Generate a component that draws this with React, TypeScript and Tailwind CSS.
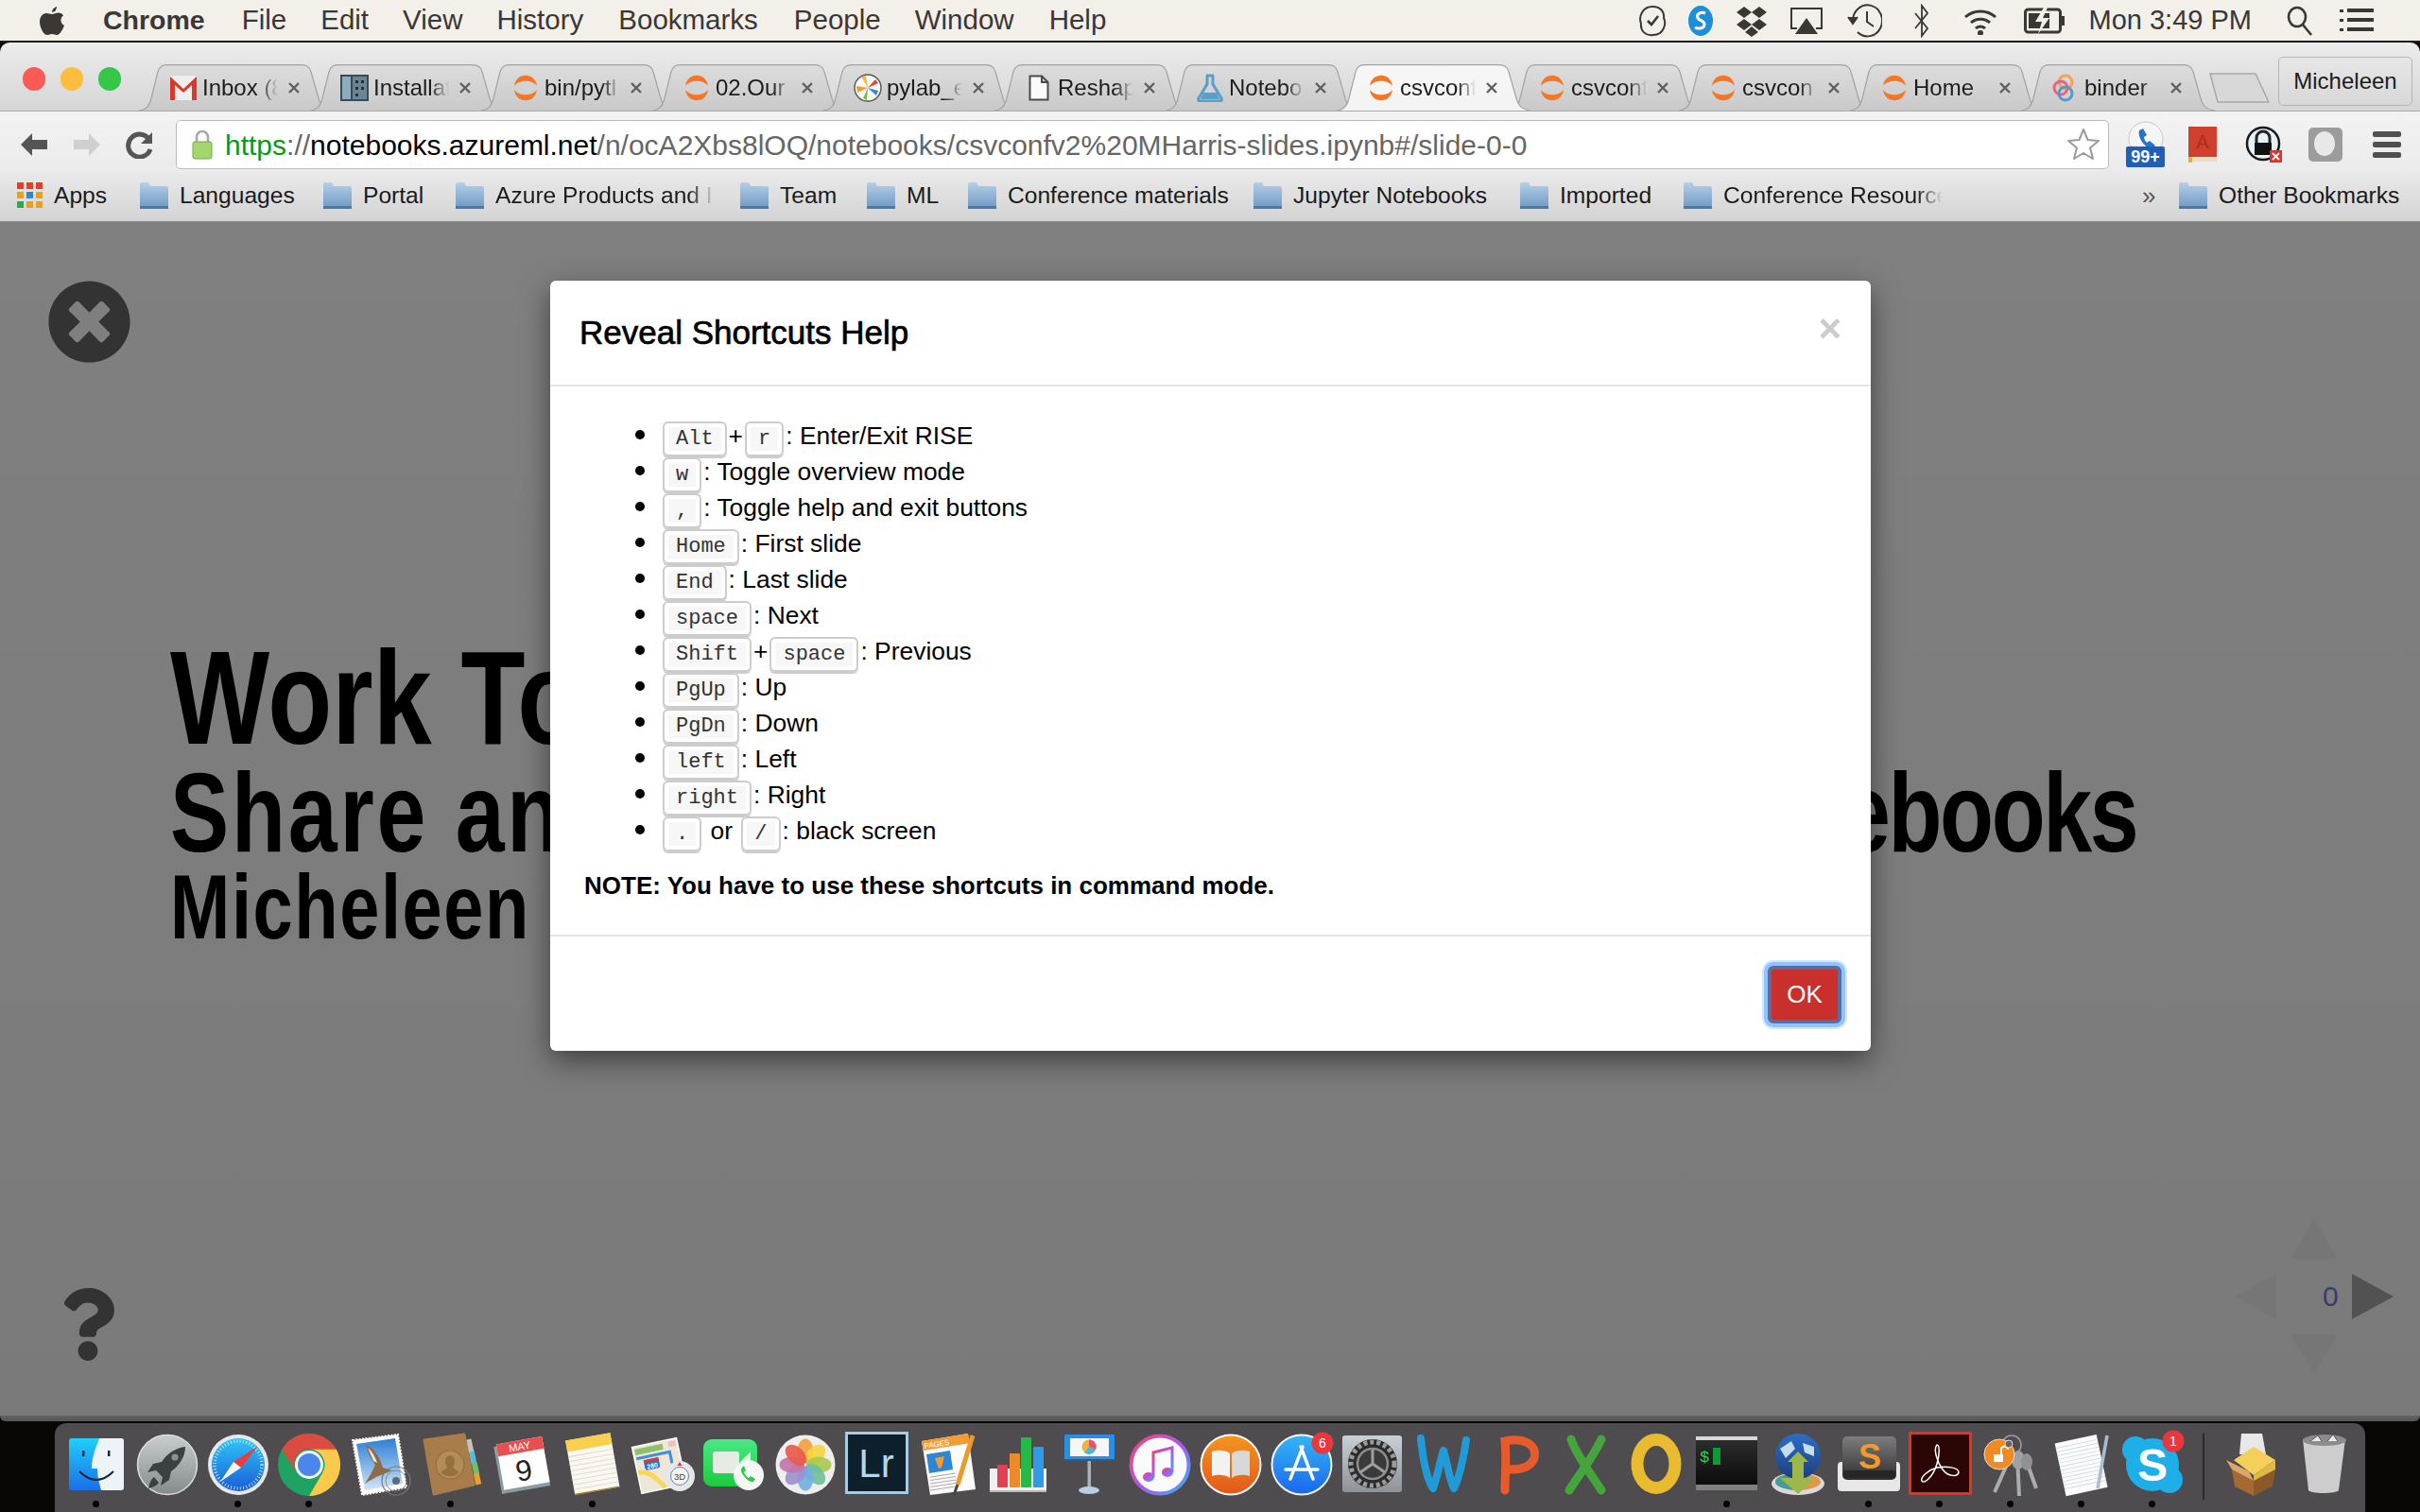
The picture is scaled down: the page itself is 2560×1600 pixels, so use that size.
import React from "react";
import { FaTimesCircle, FaQuestion } from "react-icons/fa";

const S = ({ children }: { children: React.ReactNode }) => (
  <svg viewBox="0 0 66 66" className="h-[66px] w-[66px] overflow-visible">{children}</svg>
);
const G = ({ id, a, b }: { id: string; a: string; b: string }) => (
  <defs>
    <linearGradient id={id} x1="0" y1="0" x2="0" y2="1">
      <stop offset="0" stopColor={a} />
      <stop offset="1" stopColor={b} />
    </linearGradient>
  </defs>
);
const sans = "Liberation Sans, sans-serif";

const Finder = () => (
  <S>
    <G id="fi" a="#1fd0fb" b="#1b6fe6" />
    <rect x="4" y="5" width="58" height="55" rx="3" fill="url(#fi)" />
    <path d="M36 5 C33 14 28 24 28 37 H34 C34 46 36 52 38 60 H59 a3 3 0 0 0 3 -3 V8 a3 3 0 0 0 -3 -3 Z" fill="#eef3f8" />
    <rect x="18" y="18" width="2.4" height="6" fill="#10233f" />
    <rect x="45" y="18" width="2.4" height="6" fill="#10233f" />
    <path d="M15 40 Q33 58 51 40" stroke="#10233f" strokeWidth="2" fill="none" />
  </S>
);
const Rocket = () => (
  <S>
    <G id="ro" a="#c9cdcd" b="#858a8a" />
    <circle cx="33" cy="33" r="31.5" fill="url(#ro)" stroke="#dcdede" strokeWidth="1.5" />
    <path d="M52 14 C42 15 33 21 27 30 L18 32 L12 41 L21 39 L28 46 L26 55 L35 49 L37 40 C46 34 52 24 52 14Z" fill="#3d4043" />
    <path d="M19 46 C15 49 14 54 13 58 C18 57 22 55 24 52 Z" fill="#3d4043" />
    <circle cx="41" cy="25" r="3.5" fill="#8a8f8f" />
  </S>
);
const Safari = () => (
  <S>
    <G id="sa" a="#2fc6f6" b="#1a5cd8" />
    <circle cx="33" cy="33" r="32" fill="#e6e9ec" />
    <circle cx="33" cy="33" r="28" fill="url(#sa)" />
    <circle cx="33" cy="33" r="25" fill="none" stroke="#dff1ff" strokeWidth="3.5" strokeDasharray="0.8 2.5" />
    <path d="M53 14 L28 30 L36 36Z" fill="#ee3a3a" />
    <path d="M14 51 L28 30 L36 36Z" fill="#f2f2f2" />
  </S>
);
const Chrome = () => (
  <S>
    <circle cx="33" cy="33" r="33" fill="#1ea362" />
    <path d="M61.6 16.5 A33 33 0 0 1 33 66 L47.3 41.2 A16.5 16.5 0 0 0 33 16.5 Z" fill="#fdc94a" />
    <path d="M4.4 16.5 A33 33 0 0 1 61.6 16.5 H33 A16.5 16.5 0 0 0 18.7 41.2 Z" fill="#db4b3f" />
    <circle cx="33" cy="33" r="15" fill="#f3f6fb" />
    <circle cx="33" cy="33" r="12" fill="#4a86ec" />
  </S>
);
const Mail = () => (
  <S>
    <G id="ma" a="#2e7fd6" b="#cfe6f7" />
    <polygon points="4,7 52,1 61,57 14,65" fill="#fff" stroke="#fff" strokeWidth="2" strokeDasharray="2 1.4" />
    <polygon points="8,11 49,5 57,53 17,60" fill="url(#ma)" />
    <path d="M18 12 C27 15 33 26 36 36 L46 39 L34 44 C28 46 22 50 17 53 C22 45 26 38 28 33 C23 27 20 20 18 12Z" fill="#8d6c49" />
    <path d="M20 15 C25 19 28 25 30 31 L26 29Z" fill="#e9e5de" />
    <circle cx="50" cy="50" r="15" fill="none" stroke="#77777a" strokeWidth="1.2" />
    <circle cx="50" cy="50" r="11" fill="none" stroke="#77777a" strokeWidth="0.8" />
    <circle cx="50" cy="50" r="4" fill="#5d6a7c" />
  </S>
);
const Contacts = () => (
  <S>
    <rect x="50" y="6" width="6" height="14" fill="#bfc3c2" transform="rotate(-12 53 13)" />
    <rect x="53" y="19" width="6" height="13" fill="#58bcd6" transform="rotate(-12 56 25)" />
    <rect x="56" y="31" width="6" height="12" fill="#6cc069" transform="rotate(-12 59 37)" />
    <rect x="58" y="42" width="6" height="12" fill="#e8a230" transform="rotate(-12 61 48)" />
    <polygon points="5,7 47,1 57,54 15,64" fill="#a87d49" stroke="#a87d49" strokeWidth="3" strokeLinejoin="round" />
    <circle cx="32" cy="33" r="15" fill="#b48c59" stroke="#96703f" strokeWidth="1.2" />
    <path d="M32 23 a5 6 0 0 1 5 6 c0 4 -2 6 -2 7 l7 5 a14 14 0 0 1 -20 0 l7 -5 c0 -1 -2 -3 -2 -7 a5 6 0 0 1 5 -6z" fill="#96703f" />
  </S>
);
const Calendar = () => (
  <S>
    <g transform="rotate(-10 33 33)">
      <rect x="7" y="9" width="52" height="51" fill="#8c9aa4" />
      <rect x="10" y="7" width="49" height="49" fill="#fff" />
      <rect x="10" y="7" width="49" height="13" fill="#e94f51" />
      <text x="34" y="17.5" fontSize="11" fill="#fff" textAnchor="middle" fontFamily={sans}>MAY</text>
      <text x="34" y="50" fontSize="31" fill="#222" textAnchor="middle" fontFamily={sans}>9</text>
    </g>
  </S>
);
const Notes = () => (
  <S>
    <g transform="rotate(-10 33 33)">
      <rect x="9" y="3" width="48" height="58" fill="#faf8f0" />
      <rect x="9" y="3" width="48" height="12" fill="#f8d04c" />
      {[20, 25, 30, 35, 40, 45, 50, 55].map((y) => (
        <rect key={y} x="9" y={y} width="48" height="0.8" fill="#d9d4c6" />
      ))}
      <rect x="9" y="60" width="48" height="1.4" fill="#a5812e" />
    </g>
  </S>
);
const Maps = () => (
  <S>
    <g transform="rotate(-12 28 33)">
      <rect x="4" y="9" width="48" height="50" fill="#eee7d7" stroke="#fff" strokeWidth="1.5" />
      <rect x="6" y="12" width="30" height="6" fill="#8fc168" />
      <rect x="42" y="11" width="8" height="6" fill="#f0c0c8" />
      <path d="M6 22 H42 V40" fill="none" stroke="#3f8fe8" strokeWidth="3" />
      <path d="M5 37 C16 36 22 46 30 58" fill="none" stroke="#f6d85a" strokeWidth="5" />
      <rect x="13" y="25" width="16" height="11" rx="2" fill="#2b6fd0" />
      <rect x="13" y="25" width="16" height="3" fill="#d83a3a" />
      <text x="21" y="35" fontSize="7" fill="#fff" fontWeight="700" textAnchor="middle" fontFamily={sans}>280</text>
    </g>
    <circle cx="50" cy="45" r="16" fill="#e4e8ea" />
    <circle cx="50" cy="45" r="9.5" fill="#f3f3f3" stroke="#7d8184" strokeWidth="1" />
    <text x="50" y="48.5" fontSize="9.5" fill="#444" textAnchor="middle" fontFamily={sans}>3D</text>
    <polygon points="50,30 47.5,34 52.5,34" fill="#d83a3a" />
  </S>
);
const FaceTime = () => (
  <S>
    <G id="ft" a="#4ae887" b="#1ccb3c" />
    <rect x="0" y="6" width="57" height="50" rx="9" fill="url(#ft)" />
    <rect x="10" y="19" width="28" height="23" rx="3" fill="#e6ebe4" />
    <polygon points="39,30 50,19 50,42" fill="#e6ebe4" />
    <circle cx="48" cy="44" r="16" fill="#f4f6f3" />
    <path d="M41 36 c-2 2 -1 5 2 9 c3 4 7 7 10 6 l2 -3 l-5 -3 l-2 2 c-2 -1 -4 -4 -5 -6 l2 -2 l-2 -5z" fill="#2dc94a" />
  </S>
);
const Photos = () => {
  const c = ["#f4a23e", "#f5d63f", "#a8ca4e", "#72bf9c", "#70b0e2", "#9c92cc", "#c674ab", "#ea5b4e"];
  return (
    <S>
      <circle cx="33" cy="33" r="31.5" fill="#eeeeee" />
      {c.map((f, i) => (
        <ellipse key={f} cx="33" cy="19" rx="8.6" ry="13.5" fill={f} opacity="0.92" transform={`rotate(${i * 45} 33 33)`} />
      ))}
      <circle cx="33" cy="33" r="1.4" fill="#fff" />
    </S>
  );
};
const Lr = () => (
  <S>
    <rect x="1.5" y="-0.5" width="64" height="63" fill="#0e1f2c" stroke="#a9cbe2" strokeWidth="3" />
    <text x="33" y="46" fontSize="42" fill="#b7d6ea" textAnchor="middle" fontFamily={sans}>Lr</text>
  </S>
);
const Pages = () => (
  <S>
    <polygon points="6,8 55,0 63,59 15,65" fill="#fbfbfa" />
    <polygon points="6,8 55,0 57,10 8,18" fill="#f39c31" />
    <text x="9" y="16" fontSize="8" fill="#fff" transform="rotate(-9 9 16)" fontFamily={sans}>PAGES</text>
    <polygon points="11,22 36,18 39,38 14,42" fill="#2f86d6" />
    <path d="M20 26 L30 24 L27 36 L24 37Z" fill="#f39c31" />
    {[0, 1, 2, 3, 4].map((i) => (
      <path key={i} d={`M15 ${46 + i * 3.5} L42 ${42 + i * 3.5}`} stroke="#aaa" strokeWidth="1" />
    ))}
    <path d="M60 2 L44 54" stroke="#ee9a2b" strokeWidth="5" />
    <path d="M44 54 L40 65" stroke="#444" strokeWidth="3" />
  </S>
);
const Numbers = () => (
  <S>
    <rect x="3" y="37" width="60" height="25" fill="#f0f0ee" />
    <rect x="11" y="33" width="11" height="24" rx="1" fill="#e23e55" />
    <rect x="24" y="21" width="11" height="36" rx="1" fill="#ee8a2c" />
    <rect x="36" y="4" width="11" height="53" rx="1" fill="#27b84c" />
    <rect x="49" y="14" width="11" height="43" rx="1" fill="#2f9ae8" />
    <rect x="3" y="60" width="60" height="2" fill="#bbb" />
  </S>
);
const Keynote = () => (
  <S>
    <rect x="31.5" y="26" width="3.5" height="34" fill="#a9b2b6" />
    <ellipse cx="33" cy="60" rx="11" ry="4" fill="#b8cfe0" />
    <rect x="7" y="1" width="53" height="27" rx="1" fill="#2a8ee8" />
    <rect x="13" y="5" width="41" height="19" fill="#f4f6f8" />
    <circle cx="33" cy="14" r="7.5" fill="#f0b43c" />
    <path d="M33 14 V6.5 A7.5 7.5 0 0 1 40 17Z" fill="#e8526a" />
    <path d="M33 14 L40 17 A7.5 7.5 0 0 1 28 20Z" fill="#4cb6d8" />
    <rect x="6" y="27" width="55" height="2" fill="#1d5f9e" />
  </S>
);
const ITunes = () => (
  <S>
    <defs>
      <linearGradient id="it" x1="0" y1="0" x2="1" y2="1">
        <stop offset="0" stopColor="#f4426f" />
        <stop offset="0.55" stopColor="#a45cf0" />
        <stop offset="1" stopColor="#2fb5f2" />
      </linearGradient>
    </defs>
    <circle cx="33" cy="33" r="30.5" fill="#fafafa" stroke="url(#it)" strokeWidth="4" />
    <path d="M26 46 V20 L46 15 V41" fill="none" stroke="url(#it)" strokeWidth="3" />
    <ellipse cx="21" cy="46" rx="6" ry="5" fill="url(#it)" />
    <ellipse cx="41" cy="41" rx="6" ry="5" fill="url(#it)" />
  </S>
);
const IBooks = () => (
  <S>
    <G id="ib" a="#f5961f" b="#e2581a" />
    <circle cx="33" cy="33" r="31.5" fill="url(#ib)" stroke="#fafafa" strokeWidth="2" />
    <path d="M32 21 C27 17 19 17 13 19 V45 C19 43 27 43 32 47Z" fill="#f2f2f2" />
    <path d="M34 21 C39 17 47 17 53 19 V45 C47 43 39 43 34 47Z" fill="#d8d8d8" />
  </S>
);
const AppStore = () => (
  <S>
    <G id="as" a="#35b6f6" b="#1a66ee" />
    <circle cx="33" cy="33" r="31.5" fill="url(#as)" stroke="#f2f5f8" strokeWidth="2" />
    <path d="M34 14 L21 48 M32 14 L45 48 M16 38 H50" stroke="#fff" strokeWidth="3.5" strokeLinecap="round" />
    <circle cx="55" cy="10" r="11.5" fill="#e8373d" />
    <text x="55" y="15" fontSize="14" fill="#fff" textAnchor="middle" fontFamily={sans}>6</text>
  </S>
);
const SysPrefs = () => (
  <S>
    <G id="sp" a="#c9d1d6" b="#8d9398" />
    <rect x="1" y="2" width="63" height="60" rx="3" fill="url(#sp)" />
    <circle cx="33" cy="32" r="26" fill="#2c2c2c" />
    <circle cx="33" cy="32" r="23" fill="none" stroke="#9c9c9c" strokeWidth="5" strokeDasharray="4 3" />
    <circle cx="33" cy="32" r="16" fill="#3a3a3a" stroke="#8d8d8d" strokeWidth="2.5" />
    <path d="M33 32 L33 17 M33 32 L20 41 M33 32 L46 41" stroke="#9f9f9f" strokeWidth="3" />
  </S>
);
const Word = () => (
  <S>
    <path d="M9 5 C11 25 15 48 22 58 C26 48 29 30 33 18 C37 30 39 48 44 58 C50 46 55 22 57 7" fill="none" stroke="#219bd8" strokeWidth="8" strokeLinejoin="round" strokeLinecap="round" />
  </S>
);
const PP = () => (
  <S>
    <path d="M23 60 C23 44 25 26 23 8 C40 4 58 10 54 26 C50 36 40 38 28 38" fill="none" stroke="#e65a2b" strokeWidth="9" strokeLinecap="round" />
  </S>
);
const XL = () => (
  <S>
    <path d="M18 6 C24 24 40 44 50 60 M50 6 C42 24 26 44 16 60" fill="none" stroke="#45a53c" strokeWidth="9" strokeLinecap="round" />
  </S>
);
const OL = () => (
  <S>
    <ellipse cx="33" cy="32" rx="20" ry="25.5" fill="none" stroke="#e9bb2e" strokeWidth="13" />
  </S>
);
const Terminal = () => (
  <S>
    <G id="te" a="#2c2c2c" b="#0b0b0b" />
    <rect x="0" y="3" width="65" height="4" fill="#d8d8d6" />
    <rect x="0" y="7" width="65" height="47" fill="url(#te)" />
    <rect x="0" y="54" width="65" height="6" fill="#808080" />
    <text x="4" y="30" fontSize="17" fill="#2bd84a" fontFamily="Liberation Mono, monospace">$</text>
    <rect x="18" y="15" width="8" height="18" fill="#0f9a35" />
  </S>
);
const Globe = () => (
  <S>
    <G id="gl" a="#2c6fc4" b="#1c3f80" />
    <ellipse cx="33" cy="53" rx="28" ry="12" fill="#d8dadc" />
    <ellipse cx="33" cy="51" rx="24" ry="9" fill="#e2964a" />
    <path d="M9 51 A24 9 0 0 1 33 42 V60 A24 9 0 0 1 9 51Z" fill="#3f9f9a" />
    <circle cx="33" cy="24" r="24" fill="url(#gl)" />
    <path d="M14 16 L26 8 L30 16 L20 26Z M38 10 L50 14 L50 24 L40 20Z" fill="#c3dcf0" />
    <polygon points="33,19 44,30 39,30 39,47 51,47 33,64 14,47 27,47 27,30 22,30" fill="#9db848" />
  </S>
);
const Sublime = () => (
  <S>
    <G id="su" a="#7d7d7d" b="#2f2f2f" />
    <rect x="0" y="30" width="66" height="31" rx="4" fill="#e8e8e8" />
    <rect x="5" y="3" width="57" height="46" rx="5" fill="url(#su)" />
    <rect x="6" y="39" width="55" height="8" rx="2" fill="#262626" />
    <text x="34" y="37" fontSize="36" fontWeight="700" fill="#f59a2a" textAnchor="middle" fontFamily={sans}>S</text>
  </S>
);
const Acrobat = () => (
  <S>
    <rect x="1.5" y="-0.5" width="64" height="64" fill="#2c0505" stroke="#e8321e" strokeWidth="3" />
    <path d="M30 12 C26 16 30 30 36 38 C42 46 52 46 53 41 C53 36 40 34 30 36 C22 38 12 46 14 50 C16 54 26 46 30 32 C33 22 33 12 30 12 Z" fill="none" stroke="#fff" strokeWidth="1.5" />
  </S>
);
const Keys = () => (
  <S>
    <circle cx="34" cy="12" r="10" fill="none" stroke="#9b9b9b" strokeWidth="1.6" />
    <path d="M32 26 L16 62 M40 24 L42 66 M50 30 L60 58" stroke="#a9adad" strokeWidth="4" />
    <ellipse cx="41" cy="28" rx="7" ry="10" fill="#9ea2a2" />
    <ellipse cx="50" cy="30" rx="6" ry="9" fill="#8e9292" />
    <circle cx="21" cy="22" r="16" fill="#f08a22" stroke="#ddd" strokeWidth="1" />
    <rect x="15" y="22" width="10" height="8" fill="#fff" />
    <path d="M23 22 V17 a3.5 3.5 0 0 1 7 0" fill="none" stroke="#fff" strokeWidth="2" />
    <circle cx="31" cy="11" r="4" fill="#666" stroke="#ddd" />
  </S>
);
const TextEdit = () => (
  <S>
    <g transform="rotate(-12 33 33)">
      <rect x="10" y="5" width="45" height="57" fill="#fbfbfb" />
      {[10, 14, 18, 22, 26, 30, 34, 38, 42, 46, 50, 54].map((y) => (
        <rect key={y} x="10" y={y} width="45" height="0.7" fill="#c8d3e0" />
      ))}
    </g>
    <path d="M60 2 L50 58" stroke="#a9bdd0" strokeWidth="3.5" />
  </S>
);
const Skype = () => (
  <S>
    <circle cx="15" cy="17" r="14" fill="#1eaee8" />
    <circle cx="51" cy="49" r="14" fill="#1eaee8" />
    <circle cx="33" cy="33" r="28" fill="#1eaee8" />
    <text x="33" y="50" fontSize="48" fontWeight="700" fill="#fff" textAnchor="middle" fontFamily={sans}>S</text>
    <circle cx="55" cy="8" r="11.5" fill="#e8373d" />
    <text x="55" y="13" fontSize="14" fill="#fff" textAnchor="middle" fontFamily={sans}>1</text>
  </S>
);
const Package = () => (
  <S>
    <polygon points="20,0 42,0 46,22 18,22" fill="#e8e8e8" />
    <polygon points="10,38 33,50 33,66 13,56" fill="#a56a32" />
    <polygon points="56,38 33,50 33,66 53,56" fill="#8c5828" />
    <polygon points="4,28 28,40 33,50 10,38" fill="#d9a66c" />
    <polygon points="33,14 56,28 33,44 12,28" fill="#f4cf5a" />
    <polygon points="33,44 56,28 56,38 33,50" fill="#e0b848" />
  </S>
);
const Trash = () => (
  <S>
    <path d="M10 6 L16 60 C18 64 46 64 48 60 L55 6Z" fill="#dcdcdc" opacity="0.9" />
    <ellipse cx="33" cy="7" rx="23" ry="6" fill="#8c8c8c" />
    <path d="M18 8 L26 2 L30 8 M36 8 L42 1 L47 8" fill="#e8e8e8" stroke="#555" strokeWidth="1" />
  </S>
);

const dock: [React.FC, boolean][] = [
  [Finder, true], [Rocket, false], [Safari, true], [Chrome, true], [Mail, false], [Contacts, true], [Calendar, false],
  [Notes, true], [Maps, false], [FaceTime, false], [Photos, false], [Lr, false], [Pages, false], [Numbers, false],
  [Keynote, false], [ITunes, false], [IBooks, false], [AppStore, false], [SysPrefs, false], [Word, false], [PP, false],
  [XL, false], [OL, false], [Terminal, true], [Globe, false], [Sublime, true], [Acrobat, true], [Keys, true],
  [TextEdit, true], [Skype, true],
];

const DockItem = ({ I, on }: { I: React.FC; on?: boolean }) => (
  <div className="flex w-[75px] shrink-0 flex-col items-center">
    <I />
    <div className={on ? "mt-[5px] h-[7px] w-[7px] rounded-full bg-black" : "mt-[5px] h-[7px] w-[7px]"} />
  </div>
);

/* tab favicons */
const Jup = () => (
  <svg viewBox="0 0 26 28" className="h-[28px] w-[26px]">
    <path d="M1 12 C3 -3 23 -3 25 12 C20 5 6 5 1 12Z" fill="#f37726" />
    <path d="M1 16 C3 31 23 31 25 16 C20 23 6 23 1 16Z" fill="#f37726" />
  </svg>
);
const Gmail = () => (
  <svg viewBox="0 0 30 28" className="h-[28px] w-[30px]">
    <rect x="1" y="1" width="28" height="26" fill="#eee" />
    <path d="M1 27 V2 L15 15 L29 2 V27 H24 V11 L15 19 L6 11 V27Z" fill="#d8392c" />
  </svg>
);
const Install = () => (
  <svg viewBox="0 0 30 28" className="h-[28px] w-[30px]">
    <rect x="0" y="0" width="30" height="28" fill="#3c4a55" />
    <rect x="2" y="2" width="9" height="24" fill="#8eabbd" />
    <rect x="13" y="2" width="15" height="24" fill="#6c8596" />
    <path d="M16 6h3v3h-3z M22 6h3v3h-3z M16 13h3v3h-3z M22 13h3v3h-3z M16 20h3v3h-3z" fill="#22303a" />
  </svg>
);
const Pylab = () => (
  <svg viewBox="0 0 30 30" className="h-[30px] w-[30px]">
    <circle cx="15" cy="15" r="14" fill="#f8f8f4" stroke="#555" strokeWidth="1.4" />
    <path d="M15 15 L8 3 L13 2Z" fill="#e8c23c" />
    <path d="M15 15 L4 20 L3 13Z" fill="#e8a03c" />
    <path d="M15 15 L23 6 L26 10Z" fill="#d8483c" />
    <path d="M15 15 L26 18 L24 23Z" fill="#3c88c8" />
    <path d="M15 15 L14 28 L10 26Z" fill="#7cb84c" />
  </svg>
);
const Doc = () => (
  <svg viewBox="0 0 22 28" className="h-[28px] w-[22px]">
    <path d="M1.5 1.5 H14 L20.5 8 V26.5 H1.5Z M14 1.5 V8 H20.5" fill="#fafafa" stroke="#4a4a4a" strokeWidth="2" />
  </svg>
);
const Flask = () => (
  <svg viewBox="0 0 28 30" className="h-[30px] w-[28px]">
    <path d="M10 2 H18 M11 2 V11 L2 26 C1 28 2 29 4 29 H24 C26 29 27 28 26 26 L17 11 V2" fill="none" stroke="#5b9fc6" strokeWidth="3" />
    <path d="M7 20 H21 L24 27 H4Z" fill="#5b9fc6" />
  </svg>
);
const Binder = () => (
  <svg viewBox="0 0 28 30" className="h-[30px] w-[28px]" fill="none" strokeWidth="3">
    <circle cx="14" cy="9" r="7" stroke="#f5a252" />
    <circle cx="9" cy="15" r="7" stroke="#e66581" />
    <circle cx="14" cy="21" r="7" stroke="#579aca" />
  </svg>
);

const tabs: [React.FC, string, boolean?][] = [
  [Gmail, "Inbox (8"], [Install, "Installat"], [Jup, "bin/pytl"], [Jup, "02.Our "], [Pylab, "pylab_e"], [Doc, "Reshap"],
  [Flask, "Notebo"], [Jup, "csvconf", true], [Jup, "csvconf"], [Jup, "csvcon"], [Jup, "Home"], [Binder, "binder"],
];

const Tab = ({ I, t, active }: { I: React.FC; t: string; active?: boolean }) => (
  <div className={active ? "relative z-10 -mr-[24px] flex h-[49px] w-[205px] shrink-0 items-center" : "relative -mr-[24px] flex h-[49px] w-[205px] shrink-0 items-center"}>
    <svg viewBox="0 0 205 49" className="absolute inset-0 h-[49px] w-[205px]">
      <defs>
        <linearGradient id={active ? "tabA" : "tabI"} x1="0" y1="0" x2="0" y2="1">
          <stop offset="0" stopColor={active ? "#f7f7f7" : "#dddddd"} />
          <stop offset="1" stopColor={active ? "#f3f3f3" : "#c9c9c9"} />
        </linearGradient>
      </defs>
      <path
        d="M0 49 C8 48 11 44 13 36 L20 8 C22 2 25 .7 31 .7 H170 C177 .7 180 2 182 8 L190 36 C192 44 196 48 205 49"
        fill={active ? "url(#tabA)" : "url(#tabI)"}
        stroke="#a3a3a3"
        strokeWidth="1.2"
      />
    </svg>
    <div className="relative ml-[32px] flex w-[30px] shrink-0 justify-center"><I /></div>
    <div className="relative ml-[5px] w-[80px] overflow-hidden whitespace-nowrap text-[24px] text-[#1c1c1c] [mask-image:linear-gradient(to_right,black_75%,transparent)]">{t}</div>
    <svg viewBox="0 0 14 14" className="relative ml-[10px] h-[14px] w-[14px]">
      <path d="M2 2 L12 12 M12 2 L2 12" stroke="#5f5f5f" strokeWidth="2.4" />
    </svg>
  </div>
);

const Folder = () => (
  <svg viewBox="0 0 32 29" className="h-[29px] w-[32px] shrink-0">
    <defs>
      <linearGradient id="fo" x1="0" y1="0" x2="0" y2="1">
        <stop offset="0" stopColor="#b5cfe8" />
        <stop offset="1" stopColor="#6f9ac4" />
      </linearGradient>
    </defs>
    <path d="M1 3 a2 2 0 0 1 2 -2 h7 l2 4 h17 a2 2 0 0 1 2 2 v21 h-30z" fill="url(#fo)" />
    <rect x="1" y="26" width="30" height="3" fill="#54789c" />
  </svg>
);

const marks: [string, string][] = [
  ["Languages", "w-[194px]"], ["Portal", "w-[140px]"], ["Azure Products and I", "w-[301px]"], ["Team", "w-[134px]"], ["ML", "w-[107px]"],
  ["Conference materials", "w-[302px]"], ["Jupyter Notebooks", "w-[282px]"], ["Imported", "w-[173px]"], ["Conference Resources", "w-[486px]"],
];

const Mark = ({ t, w, fade }: { t: string; w: string; fade?: boolean }) => (
  <div className={`flex shrink-0 items-center ${w}`}>
    <Folder />
    <div className={fade ? "ml-[11px] w-[232px] overflow-hidden whitespace-nowrap [mask-image:linear-gradient(to_right,black_88%,transparent)]" : "ml-[11px] whitespace-nowrap"}>{t}</div>
  </div>
);

const Kbd = ({ children }: { children: React.ReactNode }) => (
  <kbd className="mx-[2px] rounded-[6px] border-2 border-[#cccccc] bg-[#f7f7f7] px-3 py-[4px] font-['Liberation_Mono',monospace] text-[22px] leading-none text-[#333333] shadow-[0_2px_0_#cccccc,inset_0_0_0_4px_#ffffff]">
    {children}
  </kbd>
);

const tray = "stroke-[#3b3734]";

export default function App() {
  return (
    <div className="flex h-[1600px] w-[2560px] flex-col overflow-hidden bg-[#080706] font-['Liberation_Sans',sans-serif]">
      {/* menu bar */}
      <div className="flex h-[43px] shrink-0 items-center bg-[#f3efe9] text-[29.5px] text-[#3b3734]">
        <svg viewBox="0 0 26 32" className="ml-[42px] h-[32px] w-[26px]">
          <path d="M18 1 C18 4 16 7 13 7 C13 4 15 2 18 1Z M13 9 C15 9 17 7.500 20 7.500 C22 7.500 24 8.500 25 10.500 C21 13 22 19 26 21 C24 26 21 31 18 31 C16 31 15 30 13 30 C11 30 10 31 8 31 C4 31 0 23 0 17 C0 11 4 8 7 8 C9 8 11 9 13 9Z" fill="#3b3734" />
        </svg>
        <span className="ml-[41px] text-[28.5px] font-bold">Chrome</span>
        <span className="ml-[39px]">File</span>
        <span className="ml-[36px]">Edit</span>
        <span className="ml-[36px]">View</span>
        <span className="ml-[36px]">History</span>
        <span className="ml-[37px]">Bookmarks</span>
        <span className="ml-[38px]">People</span>
        <span className="ml-[36px]">Window</span>
        <span className="ml-[37px]">Help</span>
        <div className="ml-auto flex items-center pr-[37px]">
          <div className="flex w-[52px] justify-center">
            <svg viewBox="0 0 30 34" className="h-[34px] w-[30px]" fill="none">
              <path d="M15 2 C24 2 28 8 27 14 C30 20 27 32 16 32 C8 33 2 28 3 20 C0 12 5 2 15 2Z" className={tray} strokeWidth="2" />
              <path d="M10 17 L14 21 L21 12" className={tray} strokeWidth="2.6" />
            </svg>
          </div>
          <div className="flex w-[51px] justify-center">
            <svg viewBox="0 0 28 34" className="h-[34px] w-[28px]">
              <ellipse cx="14" cy="17" rx="13" ry="16" fill="#1d8fd8" />
              <path d="M19 9 C14 7 9 10 11 14 C13 18 18 16 18 21 C18 25 12 26 8 24" fill="none" stroke="#fff" strokeWidth="3" />
            </svg>
          </div>
          <div className="flex w-[56px] justify-center">
            <svg viewBox="0 0 34 34" className="h-[34px] w-[34px]" fill="#3b3734">
              <path d="M9 2 L17 8 L9 14 L1 8Z M25 2 L33 8 L25 14 L17 8Z M9 15 L17 21 L9 27 L1 21Z M25 15 L33 21 L25 27 L17 21Z M17 23 L24 29 L17 34 L10 29Z" />
            </svg>
          </div>
          <div className="flex w-[61px] justify-center">
            <svg viewBox="0 0 36 30" className="h-[30px] w-[36px]">
              <path d="M8 23 H2 V2 H34 V23 H28" fill="none" stroke="#3b3734" strokeWidth="2" />
              <polygon points="18,12 30,29 6,29" fill="#3b3734" />
            </svg>
          </div>
          <div className="flex w-[61px] justify-center">
            <svg viewBox="0 0 38 36" className="h-[36px] w-[38px]" fill="none" stroke="#3b3734" strokeWidth="2">
              <path d="M7 18 A15.500 16.500 0 1 1 12 30" />
              <path d="M2 14 L7 21 L12 14" fill="#3b3734" />
              <path d="M22 8 V19 L29 24" />
            </svg>
          </div>
          <div className="flex w-[60px] justify-center">
            <svg viewBox="0 0 18 36" className="h-[36px] w-[18px]" fill="none" stroke="#3b3734" strokeWidth="1.8">
              <path d="M2 10 L15 26 L9 34 V2 L15 10 L2 26" />
            </svg>
          </div>
          <div className="flex w-[65px] justify-center">
            <svg viewBox="0 0 38 30" className="h-[30px] w-[38px]" fill="none" stroke="#3b3734" strokeWidth="3">
              <path d="M3 11 A24 24 0 0 1 35 11" />
              <path d="M9 17 A15 15 0 0 1 29 17" />
              <path d="M14 23 A7 7 0 0 1 24 23" />
              <circle cx="19" cy="28" r="1.500" fill="#3b3734" />
            </svg>
          </div>
          <div className="flex w-[70px] justify-center">
            <svg viewBox="0 0 44 30" className="h-[30px] w-[44px]">
              <rect x="1.500" y="3" width="37" height="24" rx="3" fill="none" stroke="#3b3734" strokeWidth="3" />
              <rect x="40" y="10" width="3" height="10" fill="#3b3734" />
              <rect x="5" y="7" width="22" height="16" fill="#3b3734" />
              <path d="M21 1 L12 16 H19 L15 29 L27 12 H20 L25 1Z" fill="#f3efe9" />
            </svg>
          </div>
          <span className="ml-[12px] text-[29px]">Mon 3:49 PM</span>
          <div className="ml-[21px] flex w-[60px] justify-center">
            <svg viewBox="0 0 30 34" className="h-[34px] w-[30px]" fill="none" stroke="#3b3734" strokeWidth="2.600">
              <ellipse cx="12" cy="13" rx="9" ry="10" />
              <path d="M18 21 L27 32" />
            </svg>
          </div>
          <div className="flex w-[60px] justify-center">
            <svg viewBox="0 0 36 26" className="h-[26px] w-[36px]" fill="#3b3734">
              <path d="M0 1h4v3h-4z M0 11h4v3h-4z M0 21h4v3h-4z M8 0h28v4h-28z M8 10h28v4h-28z M8 20h28v4h-28z" />
            </svg>
          </div>
        </div>
      </div>
      <div className="h-[2px] shrink-0 bg-[#1d1b1a]" />

      {/* tab strip */}
      <div className="flex h-[73px] shrink-0 items-end rounded-t-[10px] bg-gradient-to-b from-[#ececec] to-[#d6d6d6] border-b border-[#a8a8a8]">
        <div className="flex h-[73px] w-[147px] shrink-0 items-center gap-[16px] pl-[24px] pt-[5px]">
          <div className="h-[25px] w-[24px] rounded-full bg-[#fc5a55]" />
          <div className="h-[25px] w-[24px] rounded-full bg-[#fdbd3e]" />
          <div className="h-[25px] w-[24px] rounded-full bg-[#34c749]" />
        </div>
        {tabs.map(([I, t, a], i) => (
          <Tab key={i} I={I} t={t} active={a} />
        ))}
        <svg viewBox="0 0 66 34" className="mb-[7px] ml-[17px] h-[34px] w-[66px] shrink-0">
          <path d="M2 2 H50 L64 32 H10Z" fill="#d8d8d8" stroke="#a8a8a8" strokeWidth="1.5" strokeLinejoin="round" />
        </svg>
        <div className="mb-[5px] ml-[8px] flex h-[52px] w-[142px] shrink-0 items-center justify-center rounded-[5px] border border-[#b5b5b5] text-[24px] text-[#1c1c1c]">Micheleen</div>
      </div>

      {/* toolbar */}
      <div className="flex h-[62px] shrink-0 items-center bg-gradient-to-b from-[#f3f3f3] to-[#ebebeb] pl-[8px] pt-[8px]">
        <div className="flex w-[56px] justify-center">
          <svg viewBox="0 0 32 28" className="h-[28px] w-[32px]">
            <path d="M14 2 L2 14 L14 26 V19 H30 V9 H14Z" fill="#555555" />
          </svg>
        </div>
        <div className="flex w-[56px] justify-center">
          <svg viewBox="0 0 32 28" className="h-[28px] w-[32px]">
            <path d="M18 2 L30 14 L18 26 V19 H2 V9 H18Z" fill="#cfcfcf" />
          </svg>
        </div>
        <div className="flex w-[56px] justify-center">
          <svg viewBox="0 0 30 30" className="h-[30px] w-[30px]" fill="none">
            <path d="M25 10 A12 12 0 1 0 26 20" stroke="#555555" strokeWidth="5" />
            <polygon points="28,2 28,14 16,14" fill="#555555" />
          </svg>
        </div>
        <div className="ml-[10px] flex h-[52px] w-[2045px] shrink-0 items-center rounded-[5px] border border-[#bcbcbc] bg-white pl-[16px] pr-[8px]">
          <svg viewBox="0 0 22 32" className="h-[32px] w-[22px] shrink-0">
            <path d="M5 14 V8 a6 6 0 0 1 12 0 V14" fill="none" stroke="#a8a8a8" strokeWidth="2.600" />
            <rect x="1" y="13" width="20" height="18" rx="2" fill="#a4d66e" stroke="#77a846" strokeWidth="1" />
          </svg>
          <div className="ml-[13px] whitespace-nowrap text-[30px] text-[#666666]">
            <span className="text-[#0a9a0a]">https</span>://<span className="text-black">notebooks.azureml.net</span>/n/ocA2Xbs8lOQ/notebooks/csvconfv2%20MHarris-slides.ipynb#/slide-0-0
          </div>
          <svg viewBox="0 0 36 36" className="ml-auto h-[36px] w-[36px] shrink-0">
            <polygon points="18,2 22.500,13 34,14 25,21.500 28,33 18,27 8,33 11,21.500 2,14 13.500,13" fill="#fff" stroke="#9a9a9a" strokeWidth="2" strokeLinejoin="round" />
          </svg>
        </div>
        <div className="ml-[9px] flex shrink-0 items-center">
          <div className="flex w-[60px] justify-center">
            <svg viewBox="0 0 42 48" className="h-[48px] w-[42px] overflow-visible">
              <circle cx="21" cy="18" r="18" fill="#f5f5f5" stroke="#c8c8c8" />
              <path d="M14 9 c-2 6 4 17 13 20 l4 -4 l-6 -5 l-3 2 c-2 -2 -3 -4 -3 -6 l3 -2 l-4 -7z" fill="#2672c8" />
              <rect x="0" y="26" width="41" height="22" rx="2" fill="#1f5fb8" />
              <text x="20.500" y="43" fontSize="18" fontWeight="700" fill="#fff" textAnchor="middle" fontFamily={sans}>99+</text>
            </svg>
          </div>
          <div className="flex w-[60px] justify-center">
            <svg viewBox="0 0 34 38" className="h-[38px] w-[34px]">
              <rect x="2" y="0" width="30" height="32" fill="#d0402e" />
              <text x="17" y="23" fontSize="20" fill="#a92c1e" textAnchor="middle" fontFamily={sans}>A</text>
              <rect x="6" y="32" width="26" height="5" fill="#e8dcc8" />
              <rect x="2" y="32" width="4" height="6" fill="#e0b040" />
            </svg>
          </div>
          <div className="flex w-[70px] justify-center">
            <svg viewBox="0 0 40 40" className="h-[40px] w-[40px]">
              <circle cx="19" cy="19" r="17" fill="#e8f0f8" stroke="#1a1a1a" strokeWidth="2.500" />
              <path d="M12 19 V13 a7 7 0 0 1 14 0 V19" fill="none" stroke="#222" strokeWidth="3" />
              <rect x="10" y="18" width="18" height="13" fill="#111" />
              <rect x="26" y="26" width="13" height="13" fill="#e03030" />
              <path d="M29 29 L36 36 M36 29 L29 36" stroke="#fff" strokeWidth="1.800" />
            </svg>
          </div>
          <div className="flex w-[60px] justify-center">
            <svg viewBox="0 0 38 38" className="h-[38px] w-[38px]">
              <rect x="1" y="1" width="36" height="36" rx="5" fill="#9c9c9c" />
              <ellipse cx="18" cy="18" rx="11" ry="13" fill="#e8e8e8" />
            </svg>
          </div>
          <div className="flex w-[70px] justify-center">
            <svg viewBox="0 0 30 28" className="h-[28px] w-[30px]" fill="#505050">
              <rect x="0" y="0" width="30" height="6" rx="2" />
              <rect x="0" y="11" width="30" height="6" rx="2" />
              <rect x="0" y="22" width="30" height="6" rx="2" />
            </svg>
          </div>
        </div>
      </div>

      {/* bookmarks */}
      <div className="flex h-[55px] shrink-0 items-center border-b border-[#8a8a8a] bg-gradient-to-b from-[#ebebeb] to-[#d3d3d3] text-[24.6px] text-[#1a1a1a]">
        <div className="flex w-[147px] shrink-0 items-center pl-[18px]">
          <div className="grid h-[27px] w-[27px] shrink-0 grid-cols-3 gap-[3px]">
            {["#e33e2b", "#e33e2b", "#e33e2b", "#e8a020", "#2f86d6", "#e8a020", "#2fa84f", "#e8a020", "#e8a020"].map((c, i) => (
              <div key={i} className={c === "#e33e2b" ? "bg-[#e33e2b]" : c === "#2f86d6" ? "bg-[#2f86d6]" : c === "#2fa84f" ? "bg-[#2fa84f]" : "bg-[#e8a020]"} />
            ))}
          </div>
          <span className="ml-[12px]">Apps</span>
        </div>
        {marks.slice(0, 8).map(([t, w]) => (
          <Mark key={t} t={t} w={w} fade={t.startsWith("Azure")} />
        ))}
        <Mark t={marks[8][0]} w={marks[8][1]} fade />
        <span className="w-[38px] shrink-0 text-[26px] text-[#555555]">»</span>
        <Mark t="Other Bookmarks" w="w-[240px]" />
      </div>

      {/* page */}
      <div className="relative min-h-0 flex-1 overflow-hidden bg-gradient-to-b from-[#808080] to-[#7a7a7a]">
        <div className="w-[3000px] origin-top-left scale-x-[0.79] pl-[228px] pt-[443px] font-bold text-black">
          <div className="text-[141px] leading-[120px]">Work Together</div>
          <div className="mt-[12px] text-[118px] leading-[100px] tracking-[3.5px]">
            Share and <span className="tracking-[5.8px]">Collaborate in Jupyter </span><span className="tracking-[-3px]">Notebooks</span>
          </div>
          <div className="mt-[10px] text-[96px] leading-[80px] tracking-[2px]">Micheleen Harris</div>
        </div>

        <FaTimesCircle className="absolute left-[50px] top-[61px] h-[89px] w-[89px] text-[#333333]" />
        <FaQuestion className="absolute left-[63px] top-[1128px] h-[77px] w-[60px] text-[#333333]" />

        <svg viewBox="0 0 200 200" className="absolute left-[2350px] top-[1045px] h-[200px] w-[200px]">
          <polygon points="98,8 74,52 122,52" fill="#767676" />
          <polygon points="15,92 58,68 58,116" fill="#767676" />
          <polygon points="74,132 122,132 98,175" fill="#767676" />
          <polygon points="138,68 182,92 138,116" fill="#525252" />
        </svg>
        <div className="absolute left-[2457px] top-[1120px] text-[30px] leading-[34px] text-[#3b3a6e]">0</div>

        {/* modal */}
        <div className="absolute left-[582px] top-[62px] flex h-[815px] w-[1397px] flex-col rounded-[6px] bg-white text-black shadow-[0_10px_30px_rgba(0,0,0,0.5)]">
          <div className="flex h-[112px] shrink-0 items-center justify-between border-b-2 border-[#e5e5e5] pl-[31px] pr-[31px]">
            <div className="text-[35px] [-webkit-text-stroke:0.7px_black]">Reveal Shortcuts Help</div>
            <div className="mb-[9px] text-[42px] font-bold leading-none text-[#cccccc]">×</div>
          </div>
          <div className="flex-1 pl-[36px] pt-[30px] text-[26.4px] leading-[38px]">
            <ul className="list-disc pl-[81px] marker:text-[34px] [&>li]:h-[38px]">
              <li><Kbd>Alt</Kbd>+<Kbd>r</Kbd>: Enter/Exit RISE</li>
              <li><Kbd>w</Kbd>: Toggle overview mode</li>
              <li><Kbd>,</Kbd>: Toggle help and exit buttons</li>
              <li><Kbd>Home</Kbd>: First slide</li>
              <li><Kbd>End</Kbd>: Last slide</li>
              <li><Kbd>space</Kbd>: Next</li>
              <li><Kbd>Shift</Kbd>+<Kbd>space</Kbd>: Previous</li>
              <li><Kbd>PgUp</Kbd>: Up</li>
              <li><Kbd>PgDn</Kbd>: Down</li>
              <li><Kbd>left</Kbd>: Left</li>
              <li><Kbd>right</Kbd>: Right</li>
              <li><Kbd>.</Kbd> or <Kbd>/</Kbd>: black screen</li>
            </ul>
            <p className="mt-[23px] text-[26px] font-bold">NOTE: You have to use these shortcuts in command mode.</p>
          </div>
          <div className="flex h-[123px] shrink-0 items-start justify-end border-t-2 border-[#e5e5e5] pr-[31px] pt-[31px]">
            <button className="flex h-[61px] w-[78px] items-center justify-center rounded-[6px] border-4 border-[#5d6c9e] bg-[#c9302c] text-[26px] text-white shadow-[0_0_0_4px_#8ec5ff,0_0_0_6px_#d3e7ff]">OK</button>
          </div>
        </div>
      </div>

      {/* window bottom */}
      <div className="h-[6px] shrink-0 rounded-b-[8px] bg-gradient-to-b from-[#636363] to-[#555555]" />

      {/* dock */}
      <div className="mt-[2px] flex h-[94px] w-[2444px] shrink-0 self-start rounded-t-[12px] bg-[#4e4c4f] pl-[6px] pt-[11px] ml-[58px]">
        {dock.map(([I, on], i) => (
          <DockItem key={i} I={I} on={on} />
        ))}
        <div className="ml-[16px] mr-[14px] h-[70px] w-[2px] shrink-0 bg-[#2d2b2d]" />
        <DockItem I={Package} />
        <DockItem I={Trash} />
      </div>
    </div>
  );
}
